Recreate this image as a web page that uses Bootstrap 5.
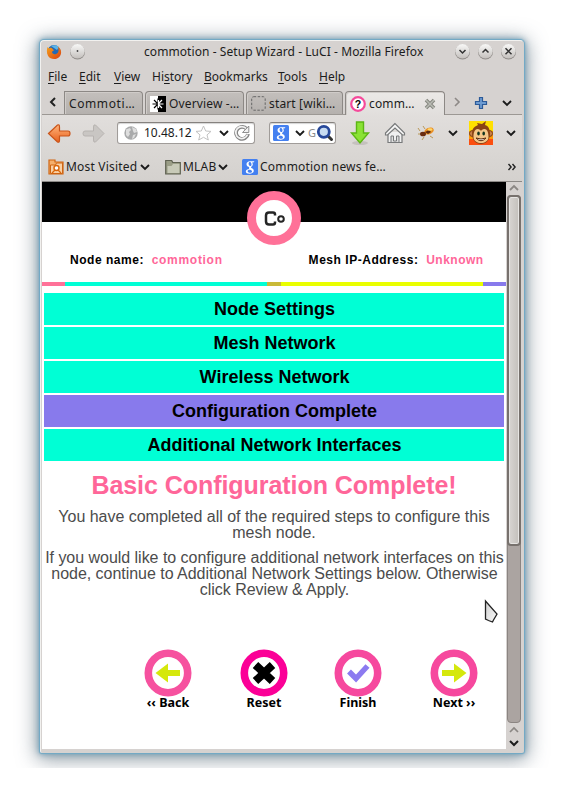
<!DOCTYPE html>
<html lang="en">
<head>
<meta charset="utf-8">
<meta name="viewport" content="width=device-width, initial-scale=1">
<title>commotion - Setup Wizard - LuCI</title>
<link href="https://cdn.jsdelivr.net/npm/bootstrap@5.3.0/dist/css/bootstrap.min.css" rel="stylesheet">
<style>
body{background:#fff;height:793px;overflow:hidden}
.desk{height:768px;padding:40px;overflow:hidden}
.win{width:484px;height:713px;border:1px solid #f2f1ef;border-right-color:#d5d1ce;border-bottom:0;border-radius:4px 4px 2px 2px;padding:0 1px;background:#d6d2d0;box-shadow:0 0 1px 1px #70a9c6,0 0 6px 1px #6f9db5,0 3px 20px 3px rgba(70,88,104,.62);font:12.5px/16px "Noto Sans","Open Sans",sans-serif;color:#1c1c1c;white-space:nowrap}
.win svg{display:block;flex:none}
.defs{position:absolute;width:0;height:0}
.slots{display:grid;align-items:center}
.slots>*{min-width:0}
.titlebar{height:21px;grid-template-columns:23px 75px 310px 23px 23px 22px;padding-left:4px}
.titlebar .cap{letter-spacing:.07px;font-size:12px}
.menubar{height:29px;padding:1px 0 0 6px;grid-template-columns:31px 35px 38px 52px 74px 41px 40px;font-size:12px}
.menubar u{text-underline-offset:2px}
.tabrow{height:24px;grid-template-columns:22px 81px 101px 99px 100px 24px 25px 25px;border-bottom:1px solid #9c9894}
.tb{height:23px;border:1px solid #8c8885;border-bottom:0;border-radius:4px 4px 0 0;background:linear-gradient(#c3bfbc,#b5b1ae);display:flex;align-items:center;gap:3px;padding:1px 0 0 4px;overflow:hidden;margin-right:2px;font-size:12px;letter-spacing:.15px;box-shadow:inset 1px 1px #d0ccc9}
.tb.on{height:24px;background:linear-gradient(#ebe9e7,#e1dedc);margin-bottom:-1px;margin-right:0}
.tb.first{border-radius:0 4px 0 0;letter-spacing:.6px}
.navrow{height:35px;background:linear-gradient(#e1dedc,#dad7d4);grid-template-columns:34px 41px 152px 78px 36px 34px 31px 21px 29px 20px;padding-left:0}
.field{height:22px;border:1px solid #a09c99;border-top-color:#85817e;border-radius:3px;background:#fff;display:grid;align-items:center;box-shadow:inset 0 1px 1px #d4d4d4;overflow:hidden}
.url{width:138px;grid-template-columns:26px 51px 24px 15px 18px;font-size:12px}
.find{width:67px;grid-template-columns:18px 17px 8px 19px;padding-left:3px}
.bookrow{height:32px;background:linear-gradient(#dad7d4,#d4d1ce);border-bottom:1px solid #8c8986;grid-template-columns:18px 74px 25px 18px 35px 24px 18px 243px 20px;padding:2px 0 0 6px;font-size:12px;letter-spacing:.2px}
.view{height:567px;background:#fff}
.page{width:464px;font-family:"Liberation Sans",Arial,sans-serif;color:#000}
.black{height:40px;background:#000;padding:9px 0 0 205px}
.who{height:60px;padding:31px 23px 0 28px;font-size:12px;font-weight:700;line-height:15px;letter-spacing:.53px}
.pk{color:#f69;letter-spacing:.7px;margin-right:-.7px}
.who>:last-child .pk{letter-spacing:.5px}
.strip{height:4px}
.s1{width:23px;background:#ff7198}.s2{width:202px;background:#00ffd5}.s3{width:14px;background:#c9ba38}.s4{width:202px;background:#e9ff00}.s5{width:23px;background:#887aec}
.steps{padding:7px 2px 0;display:grid;gap:2px}
.step{height:32px;line-height:32px;background:#00ffd5;text-align:center;font-size:18px;font-weight:700;padding-left:1px}
.step.cur{background:#887aec}
.msg{color:#4c4c4c;font-size:16px;line-height:16px;text-align:center;height:188px;white-space:nowrap;letter-spacing:-.02px}
.msg h1{font-size:25px;line-height:30px;font-weight:700;color:#f69;margin:0;padding:9px 0 9px;letter-spacing:-.05px}
.msg p{margin:0 0 9px}
.msg p+p{letter-spacing:-.03px;padding-left:1px}
.acts{display:grid;grid-template-columns:96px 94px 96px 60px;padding-left:96px;font:700 12.5px/14px "Noto Sans",sans-serif}
.acts>div{width:60px;text-align:center;justify-self:start}
.acts svg{margin:0 auto -1px}
.bar{width:16px;background:#d6d2d0}
.trough{height:528px;background:#aba4a1;border:1px solid #8b8582;border-radius:4px;margin:0 1px}
.thumb{height:351px;border:2px solid #77716d;border-radius:4px;margin:-1px;background:linear-gradient(90deg,#d8d5d2,#c3bfbb);box-shadow:inset 0 0 0 1px #e7e5e3}
.ptr{position:absolute;left:484px;top:599px}
</style>
<script src="https://cdn.jsdelivr.net/npm/bootstrap@5.3.0/dist/js/bootstrap.bundle.min.js"></script>
</head>
<body>
<svg class="defs" aria-hidden="true">
<defs>
<linearGradient id="knob" x2="0" y2="1"><stop stop-color="#f8f8f7"/><stop offset="1" stop-color="#c4c0bd"/></linearGradient>
<linearGradient id="orange" x2="0" y2="1"><stop stop-color="#ffb57c"/><stop offset="1" stop-color="#e8601c"/></linearGradient>
<linearGradient id="fox" x2="1" y2="1"><stop stop-color="#f5a21c"/><stop offset="1" stop-color="#d9400f"/></linearGradient>
<linearGradient id="arrow" x2="1" y2="1"><stop stop-color="#cfcfcf"/><stop offset="1" stop-color="#fafafa"/></linearGradient>
</defs>
<symbol id="down" viewBox="0 0 10 8"><path d="M1 2 5 6 9 2" fill="none" stroke="#1b1b1b" stroke-width="1.900"/></symbol>
<symbol id="goog" viewBox="0 0 16 16"><rect width="16" height="16" rx="1.5" fill="#4480f0"/><path d="M12.500 2.300H8.200C5.700 2.300 4.500 3.700 4.500 5.300s1.300 2.700 3 2.700c-.9.900-.7 1.500.1 2.100-2.400.1-3.800 1-3.800 2.400 0 1.500 1.600 2.200 3.700 2.200 2.600 0 4.300-1.200 4.300-2.900 0-2.400-2.800-2.500-2.800-3.500 0-.7 1.800-1.100 1.800-3 0-.9-.4-1.500-.9-1.900h1.400zM8 3.100c.9 0 1.500 1.100 1.500 2.300 0 1-.5 1.600-1.300 1.600-1 0-1.600-1.200-1.600-2.300 0-.9.500-1.600 1.400-1.600zm.3 7.700c1.300.6 1.700.9 1.700 1.600 0 .8-.7 1.300-2 1.300-1.400 0-2.400-.6-2.400-1.500 0-1 1.200-1.400 2.700-1.400z" fill="#fff"/></symbol>
</svg>
<div class="desk">
<main class="win">
  <header class="titlebar slots">
    <svg width="16" height="16" viewBox="0 0 16 16"><circle cx="8" cy="7.5" r="6.5" fill="#2269b5"/><path d="M5 2C7 .5 11 1 13 3L11 6 8 4z" fill="#5bb4e8"/><path d="M1.5 3 3 4.4C4 3.6 5 3.8 6 4.2L8 6.3 6 7.8C6 10.5 10 11.4 12 8.5 13 6.5 12.6 4 11.6 2.6 16 5 15.8 10 13.5 12.8 10 16.5 4 15.4 2 11.8.5 9 .7 5.500 1.500 3z" fill="url(#fox)"/></svg>
    <svg width="17" height="17" viewBox="0 0 17 17"><circle cx="8.500" cy="9" r="7.500" fill="#8f8b88"/><circle cx="8.500" cy="8.300" r="7.200" fill="url(#knob)"/><circle cx="8.500" cy="8" r=".9" fill="#444"/></svg>
    <span class="cap">commotion - Setup Wizard - LuCI - Mozilla Firefox</span>
    <svg width="17" height="17" viewBox="0 0 17 17"><circle cx="8.500" cy="9" r="7.500" fill="#8f8b88"/><circle cx="8.500" cy="8.300" r="7.200" fill="url(#knob)"/><path d="M5.500 7 8.500 10l3-3" fill="none" stroke="#333" stroke-width="1.500"/></svg>
    <svg width="17" height="17" viewBox="0 0 17 17"><circle cx="8.500" cy="9" r="7.500" fill="#8f8b88"/><circle cx="8.500" cy="8.300" r="7.200" fill="url(#knob)"/><path d="M5.500 9.500 8.500 6.500l3 3" fill="none" stroke="#333" stroke-width="1.500"/></svg>
    <svg width="17" height="17" viewBox="0 0 17 17"><circle cx="8.500" cy="9" r="7.500" fill="#8f8b88"/><circle cx="8.500" cy="8.300" r="7.200" fill="url(#knob)"/><path d="m5.500 5.300 6 6m0-6-6 6" fill="none" stroke="#333" stroke-width="1.500"/></svg>
  </header>
  <nav class="menubar slots"><span><u>F</u>ile</span><span><u>E</u>dit</span><span><u>V</u>iew</span><span>Hi<u>s</u>tory</span><span><u>B</u>ookmarks</span><span><u>T</u>ools</span><span><u>H</u>elp</span></nav>
  <div class="tabrow slots">
    <svg width="22" height="20" viewBox="0 0 22 20"><path d="M13 5 9 9l4 4" fill="none" stroke="#222" stroke-width="2"/></svg>
    <div class="tb first">Commoti…</div>
    <div class="tb"><svg width="16" height="16" viewBox="0 0 16 16"><path fill="#fff" d="M0 0h8v16H0z"/><path d="M8 0h8v16H8z"/><path d="M8 2.500v11M8 8H2.500M8 8 4 4m4 4-4 4" stroke="#000" stroke-width="1.200"/><path d="M8 8h5.500M8 8l4-4M8 8l4 4M8.500 4v8" stroke="#fff" stroke-width="1.200"/></svg><span>Overview -…</span></div>
    <div class="tb"><svg width="15" height="15" viewBox="0 0 15 15"><rect x=".7" y=".7" width="13.500" height="13.500" rx="2" fill="none" stroke="#666" stroke-dasharray="2.500 1.500"/></svg><span>start [wiki…</span></div>
    <div class="tb on"><svg width="16" height="16" viewBox="0 0 16 16"><circle cx="8" cy="8" r="6.800" fill="#fff" stroke="#f54a9b" stroke-width="2.200"/><text x="8" y="11.600" text-anchor="middle" font-family="Liberation Sans" font-size="10.500" font-weight="700">?</text></svg><span>comm…</span><svg class="ms-auto me-2" width="12" height="12" viewBox="0 0 12 12"><path d="m2 2 8 8m0-8-8 8" stroke="#85877f" stroke-width="3.600"/><path d="m2 2 8 8m0-8-8 8" stroke="#b9bbb4" stroke-width="1.500"/></svg></div>
    <svg width="24" height="20" viewBox="0 0 24 20"><path d="m10 5 4 4-4 4" fill="none" stroke="#8d8986" stroke-width="1.600"/></svg>
    <svg width="25" height="20" viewBox="0 0 25 20"><path d="M10.500 4.500h3v4h4v3h-4v4h-3v-4h-4v-3h4z" fill="#6d9bd1" stroke="#2c5a98" stroke-width="1.200"/></svg>
    <svg class="mx-auto" width="10" height="8"><use href="#down"/></svg>
  </div>
  <div class="navrow slots">
    <svg width="34" height="24" viewBox="0 0 34 24"><path d="M6.500 12.500 15.500 4q2-1 2 2v4H26q2 0 2 2.500T26 15h-8.500v4q0 3-2 2z" fill="url(#orange)" stroke="#c9541a" stroke-width="1.200"/></svg>
    <svg width="34" height="24" viewBox="0 0 34 24"><path d="M28 12.500 19.500 4q-2-1-2 2v4H9q-2 0-2 2.500T9 15h8.500v4q0 3 2 2z" fill="#c9c6c3" stroke="#b7b3b0"/></svg>
    <div class="field url">
      <svg class="mx-auto" width="14" height="14" viewBox="0 0 14 14"><circle cx="7" cy="7" r="6.700" fill="#a9aaab"/><path d="M2 3.500 6 2l1 2-2 2 1 2-2 3-2-2zM8 1l4 2 1 3-3 1-1-2zM9 9l3-1-2 4-2 1z" fill="#dedede"/></svg>
      <span>10.48.12</span>
      <svg width="17" height="16" viewBox="0 0 17 16"><path d="m8.500 1 2.200 5 5.300.400-4 3.500 1.300 5.100-4.800-2.700L3.700 15 5 9.900 1 6.400 6.300 6z" fill="#fff" stroke="#c2c2c2"/></svg>
      <svg width="10" height="8"><use href="#down"/></svg>
      <svg width="16" height="16" viewBox="0 0 16 16"><path d="M12.500 3.800A6 6 0 1 0 14 9" fill="none" stroke="#858585" stroke-width="3.800"/><path d="M12.500 3.800A6 6 0 1 0 13.500 9.500" fill="none" stroke="#f2f2f2" stroke-width="1.700"/><path d="M14.800 1v6.500H8.500z" fill="#f2f2f2" stroke="#858585" stroke-width=".9"/></svg>
    </div>
    <div class="field find">
      <svg width="16" height="16"><use href="#goog"/></svg>
      <svg class="mx-auto" width="10" height="8"><use href="#down"/></svg>
      <span style="color:#8b8b8b;font-size:11px">G</span>
      <svg width="18" height="18" viewBox="0 0 18 18"><path d="m11 11 4.500 4.500" stroke="#333" stroke-width="3" stroke-linecap="round"/><circle cx="7.800" cy="7.800" r="5.500" fill="#c8dcf2" stroke="#27489a" stroke-width="2.800"/></svg>
    </div>
    <svg width="26" height="26" viewBox="0 0 26 26"><ellipse cx="13" cy="23" rx="8" ry="2" fill="#c5c1be"/><path d="M9.500 2h7v11h5L13 23 4.500 13h5z" fill="#8ae234" stroke="#5cb614" stroke-width="1.400"/></svg>
    <svg width="24" height="24" viewBox="0 0 24 24"><path d="M5 11v10.500h14V11" fill="#f0f0f0" stroke="#77797a" stroke-width="1.200"/><path d="M8 21v-6h2.500v5h3v-5H16v6" fill="#ddd" stroke="#77797a"/><path d="M12 2.500 2.500 12v2h2L12 7l7.500 7h2v-2z" fill="#f5f5f5" stroke="#77797a" stroke-width="1.200"/></svg>
    <svg width="20" height="16" viewBox="0 0 20 16"><path d="m3 6-2-3m6 9-2 3m8-4 3 2M8 4 6 1m-3 8H1" stroke="#b99859"/><ellipse cx="12" cy="6" rx="5" ry="3.300" transform="rotate(-22 12 6)" fill="#ea9126"/><path d="m8 7 3 2 3-2-2-2z" fill="#5b2810"/><ellipse cx="13" cy="4.500" rx="2.500" ry="1.300" fill="#ffd76b"/><ellipse cx="6" cy="9" rx="3" ry="2.300" fill="#6b2c10"/></svg>
    <svg width="10" height="8"><use href="#down"/></svg>
    <svg width="24" height="24" viewBox="0 0 24 24"><path fill="#ffe000" d="M0 0h24v24H0z"/><path fill="#fb4f10" d="M0 18h24v6H0z"/><path fill="#fd9b0a" d="M0 10h24v8H0z"/><circle cx="3.500" cy="12.500" r="3" fill="#c98248" stroke="#7b3b12"/><circle cx="20.500" cy="12.500" r="3" fill="#c98248" stroke="#7b3b12"/><path d="M3 13C3 5 8 5 9 4L8 2l5 1 4-3-1 4c4 1 5 5 5 9 0 6-4 10-9 10S3 19 3 13z" fill="#8a4315"/><path d="M4.500 16c0-4 1-8 4-8 2 0 3 1 3.500 2 .5-1 1.500-2 3.500-2 3 0 4 4 4 8 0 4-4 6-7.500 6s-7.500-2-7.500-6z" fill="#f4c78a"/><ellipse cx="9.500" cy="12.500" rx="1.300" ry="2" fill="#10331f"/><ellipse cx="14.700" cy="12.500" rx="1.300" ry="2" fill="#10331f"/><path d="M7 17q5 5.500 10 0-5 2-10 0z" fill="#fff" stroke="#5c2b10"/></svg>
    <svg class="ms-2" width="10" height="8"><use href="#down"/></svg>
  </div>
  <div class="bookrow slots">
    <svg width="16" height="16" viewBox="0 0 16 16"><path d="M1 15V1h6v2h8v12z" fill="#f5b06d" stroke="#cf6412" stroke-width="1.200"/><path d="M2.500 14.500V6h5l1-2h6v10.500z" fill="#f9d1a5" stroke="#cf6412"/><circle cx="8.500" cy="9" r="2.500" fill="#fff" stroke="#d9660b" stroke-width="1.400"/><path d="m10 11 3 3M4 14l3-3" stroke="#d9660b" stroke-width="1.300"/></svg>
    <span>Most Visited</span>
    <svg width="10" height="8"><use href="#down"/></svg>
    <svg width="16" height="16" viewBox="0 0 16 16"><path d="M.7 15V1.500h6l1 2h7.600V15z" fill="#9a9d86" stroke="#5e6151" stroke-width="1.200"/><path d="M2.500 14V7h4l1.500-2h6.500v9z" fill="#c8cab8"/></svg>
    <span>MLAB</span>
    <svg width="10" height="8"><use href="#down"/></svg>
    <svg width="16" height="16"><use href="#goog"/></svg>
    <span>Commotion news fe…</span>
    <svg class="ms-1" width="10" height="8" viewBox="0 0 10 8"><path d="m1.500 1 2.600 3-2.600 3m4-6 2.600 3-2.600 3" fill="none" stroke="#222" stroke-width="1.400"/></svg>
  </div>
  <div class="view d-flex">
    <section class="page">
      <div class="black"><svg width="54" height="54" viewBox="0 0 54 54"><circle cx="27" cy="27" r="22.500" fill="#fff" stroke="#ff7198" stroke-width="9"/><path d="M28 24.500v-1q0-2-2-2h-4q-3 0-3 3v6q0 3 3 3h4q2 0 2-2v-1" fill="none" stroke="#252525" stroke-width="2.500"/><circle cx="34" cy="28" r="2.800" fill="none" stroke="#252525" stroke-width="2"/></svg></div>
      <div class="who d-flex justify-content-between"><span>Node name:&nbsp; <span class="pk">commotion</span></span><span>Mesh IP-Address:&nbsp; <span class="pk">Unknown</span></span></div>
      <div class="strip d-flex"><i class="s1"></i><i class="s2"></i><i class="s3"></i><i class="s4"></i><i class="s5"></i></div>
      <div class="steps"><div class="step">Node Settings</div><div class="step">Mesh Network</div><div class="step">Wireless Network</div><div class="step cur">Configuration Complete</div><div class="step">Additional Network Interfaces</div></div>
      <div class="msg"><h1>Basic Configuration Complete!</h1>
        <p>You have completed all of the required steps to configure this<br>mesh node.</p>
        <p>If you would like to configure additional network interfaces on this<br>node, continue to Additional Network Settings below. Otherwise<br>click Review &amp; Apply.</p></div>
      <div class="acts">
        <div><svg width="48" height="48" viewBox="0 0 48 48"><circle cx="24" cy="24" r="19.700" fill="#fff" stroke="#f6519f" stroke-width="7.600"/><path d="M11.500 24 24 14.500V21h12v6H24v6.500z" fill="#d5e80c"/></svg>‹‹ Back</div>
        <div><svg width="48" height="48" viewBox="0 0 48 48"><circle cx="24" cy="24" r="19.700" fill="#fff" stroke="#fb0097" stroke-width="7.600"/><path d="m15.500 16 17 16m0-16-17 16" stroke="#000" stroke-width="8"/></svg>Reset</div>
        <div><svg width="48" height="48" viewBox="0 0 48 48"><circle cx="24" cy="24" r="19.700" fill="#fff" stroke="#f6489e" stroke-width="7.600"/><path d="m15 22.500 7 7L33.500 17" fill="none" stroke="#8c7af0" stroke-width="5.500"/></svg>Finish</div>
        <div><svg width="48" height="48" viewBox="0 0 48 48"><circle cx="24" cy="24" r="19.700" fill="#fff" stroke="#f6489e" stroke-width="7.600"/><path d="M36.500 24 24 14.500V21H12v6h12v6.500z" fill="#d5e80c"/></svg>Next ››</div>
      </div>
    </section>
    <div class="bar">
      <svg width="16" height="13" viewBox="0 0 16 13"><path d="m4 8 4-4 4 4" fill="none" stroke="#8b8784" stroke-width="1.800"/></svg>
      <div class="trough"><div class="thumb"></div></div>
      <svg width="16" height="26" viewBox="0 0 16 26"><path d="m4 9 4-4 4 4" fill="none" stroke="#8b8784" stroke-width="1.700"/><path d="m4 18 4 4 4-4" fill="none" stroke="#1d1d1d" stroke-width="2"/></svg>
    </div>
  </div>
</main>
</div>
<svg class="ptr" width="16" height="26" viewBox="0 0 16 26"><path d="M1.500 2v18l2 1 1 .5 4 1.500 1-2 3.500-6z" fill="url(#arrow)" stroke="#222" stroke-width="1.300"/></svg>
</body>
</html>
